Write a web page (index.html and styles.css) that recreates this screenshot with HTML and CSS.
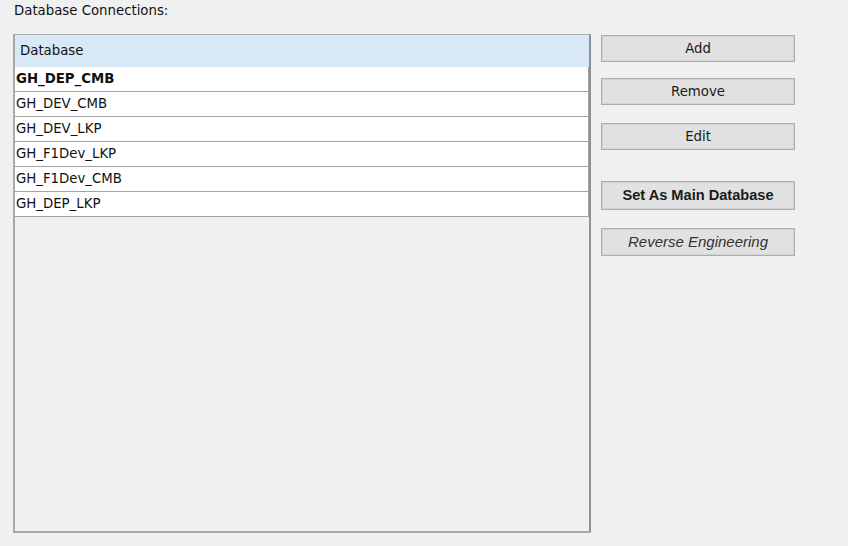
FILE: index.html
```html
<!DOCTYPE html>
<html>
<head>
<meta charset="utf-8">
<link rel="stylesheet" href="styles.css">
</head>
<body>
<div class="panel">
  <div class="label">Database Connections:</div>
  <div class="main">
    <div class="table">
      <div class="thead">Database</div>
      <div class="row bold">GH_DEP_CMB</div>
      <div class="row">GH_DEV_CMB</div>
      <div class="row">GH_DEV_LKP</div>
      <div class="row">GH_F1Dev_LKP</div>
      <div class="row">GH_F1Dev_CMB</div>
      <div class="row">GH_DEP_LKP</div>
    </div>
    <div class="buttons">
      <div class="btn b-add">Add</div>
      <div class="btn b-remove">Remove</div>
      <div class="btn b-edit">Edit</div>
      <div class="btn b-main">Set As Main Database</div>
      <div class="btn b-rev">Reverse Engineering</div>
    </div>
  </div>
</div>
</body>
</html>
```
FILE: styles.css
```css
html, body {
  margin: 0;
  padding: 0;
  background: #f0f0f0;
}
body {
  font-family: "DejaVu Sans", sans-serif;
  font-size: 13.3px;
  color: #111;
  width: 848px;
  height: 546px;
  overflow: hidden;
}
.panel {
  padding-left: 13px;
}
.label {
  height: 34px;
  line-height: 21px;
  padding-left: 1px;
}
.main {
  display: flex;
  gap: 10px;
  align-items: flex-start;
}
.table {
  width: 574px;
  height: 496px;
  border-top: 1px solid #a6a9ad;
  border-left: 2px solid #a6a9ad;
  border-right: 2px solid #8d9196;
  border-bottom: 2px solid #a6a9ad;
  background: #f0f0f0;
}
.thead {
  height: 32px;
  line-height: 32px;
  background: #d9e8f6;
  padding-left: 5px;
}
.row {
  height: 24px;
  line-height: 24px;
  background: #fff;
  border-bottom: 1px solid #a3a3a3;
  border-right: 1px solid #a3a3a3;
  padding-left: 1px;
}
.bold {
  font-weight: bold;
}
.buttons {
  width: 194px;
  display: flex;
  flex-direction: column;
  padding-top: 1px;
}
.btn {
  box-sizing: border-box;
  height: 27px;
  line-height: 25px;
  text-align: center;
  background: #e1e1e1;
  border: 1px solid #adadad;
  box-shadow: inset 0 0 0 1px #d3d3d3;
  color: #1a1a1a;
}
.b-remove { margin-top: 16px; }
.b-edit { margin-top: 18px; }
.b-main {
  margin-top: 31px;
  height: 29px;
  line-height: 27px;
  font-family: "Liberation Sans", Arial, sans-serif;
  font-weight: bold;
  font-size: 14.6px;
}
.b-rev {
  margin-top: 18px;
  height: 28px;
  line-height: 26px;
  font-family: "Liberation Sans", Arial, sans-serif;
  font-style: italic;
  font-size: 15px;
  color: #333;
}
```
